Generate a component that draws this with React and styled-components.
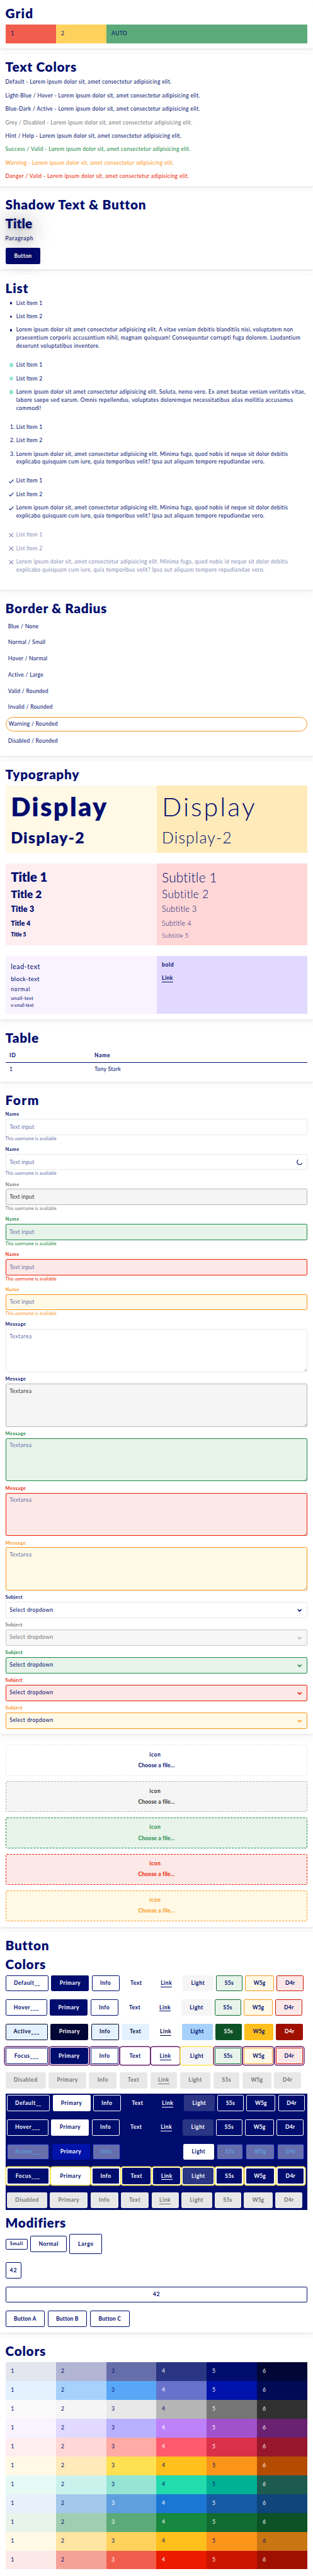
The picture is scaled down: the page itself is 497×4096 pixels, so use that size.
import React from "react";
import styled, { createGlobalStyle, css } from "styled-components";

const navy = "#000d6e";
const green = "#16883f";
const red = "#eb1a00";
const orange = "#fb951a";

const GlobalStyle = createGlobalStyle`
  *, *::before, *::after { box-sizing: border-box; }
  html { font-size: 8.5735px; background: #fff; }
  body {
    margin: 0;
    color: ${navy};
    font-family: Lato, "Open Sans", sans-serif;
    font-size: 1rem;
    line-height: 1.5rem;
    letter-spacing: 0.035em;
    overflow: hidden;
  }
  p, h1, ul, ol { margin: 0; padding: 0; }
`;

const Page = styled.main`
  display: flex;
  flex-direction: column;
  gap: 1rem;
`;

const Section = styled.section`
  padding: 1rem;
  border-radius: 0.25rem;
  background: #fff;
  box-shadow: 0 0.125rem 0.6rem rgba(0, 0, 0, 0.11);
`;

const Heading = styled.h1`
  font-size: 2.42rem;
  font-weight: 800;
  line-height: 3rem;
  letter-spacing: ${(p) => (p.$track === undefined ? 0.036 : p.$track)}em;
  margin-bottom: 0.5rem;
  white-space: nowrap;
`;

const Grid = styled.div`
  display: grid;
  grid-template-columns: ${(p) => p.$columns};
`;

const Cell = styled.div`
  padding: 1rem;
  background: ${(p) => p.$bg};
  color: ${(p) => p.$color || navy};
`;

const Paragraph = styled.p`
  color: ${(p) => p.$color || navy};
  letter-spacing: ${(p) => p.$track || 0.0365}em;
  white-space: nowrap;
  & + & { margin-top: 1rem; }
`;

const shadowText = css`
  text-shadow: 0 0.125rem 0.5rem rgba(0, 0, 0, 0.28), 0 0.5rem 4rem rgba(0, 0, 0, 0.75);
`;

const ShadowHeading = styled(Heading)`
  ${shadowText}
`;

const ShadowParagraph = styled(Paragraph)`
  margin-bottom: 1rem;
  ${shadowText}
`;

const Button = styled.button`
  display: inline-flex;
  align-items: center;
  justify-content: center;
  flex: none;
  width: ${(p) => (p.$w ? `${p.$w / 16}rem` : "100%")};
  height: ${(p) => (p.$h || 48) / 16}rem;
  padding: 0;
  border: 0.125rem solid ${(p) => p.$border || "transparent"};
  border-radius: 0.25rem;
  background: ${(p) => p.$bg || "transparent"};
  background-clip: ${(p) => (p.$border ? "padding-box" : "border-box")};
  color: ${(p) => p.$color || navy};
  font-family: inherit;
  font-size: ${(p) => p.$size || "1rem"};
  font-weight: 700;
  line-height: 1.5rem;
  letter-spacing: ${(p) => (p.$track === undefined ? 0.06 : p.$track)}em;
  white-space: nowrap;
  ${(p) =>
    p.$ring &&
    css`
      box-shadow: 0 0 0 0.125rem #fff, 0 0 0 0.3rem ${p.$ring};
    `}
`;

const ShadowButton = styled(Button)`
  text-shadow: 0 0.125rem 0.5rem rgba(0, 0, 0, 0.5), 0 0.5rem 4rem rgba(0, 0, 0, 0.75);
`;

const ButtonRow = styled.div`
  display: flex;
  align-items: center;
  gap: 0.5rem;
  & + & { margin-top: 1.5rem; }
`;

const DarkPanel = styled.div`
  margin: 1rem 0;
  padding: 0.25rem;
  background: ${navy};
`;

const LinkText = styled.span`
  display: inline-block;
  border-bottom: 0.125rem solid currentColor;
  line-height: 1.25rem;
  margin-top: 0.125rem;
`;

/* Lists */
const List = styled.ul`
  list-style: none;
  margin-bottom: 2rem;
  opacity: ${(p) => (p.$muted ? 0.5 : 1)};
`;

const Item = styled.li`
  display: flex;
  & + & { margin-top: 1rem; }
`;

const Marker = styled.span`
  display: flex;
  align-items: center;
  justify-content: ${(p) => (p.$end ? "flex-end" : "center")};
  flex: none;
  width: 2rem;
  height: 1.5rem;
  padding-left: 0.125rem;
  padding-right: ${(p) => (p.$end ? "0.25rem" : 0)};
`;

const Dot = styled.span`
  width: ${(p) => p.$size}rem;
  height: ${(p) => p.$size}rem;
  border-radius: 50%;
  background: ${(p) => p.$color};
  margin-left: ${(p) => (p.$shift || 0)}rem;
`;

const ItemText = styled.div`
  display: flex;
  flex-direction: column;
`;

const ItemLine = styled.span`
  letter-spacing: ${(p) => p.$track}em;
  white-space: nowrap;
`;

const Glyph = styled.svg`
  display: block;
  width: ${(p) => p.$w}rem;
  height: ${(p) => p.$h}rem;
  fill: none;
  stroke: ${(p) => p.$color || "currentColor"};
`;

/* Border & Radius */
const BorderBox = styled.div`
  padding: 0.5rem;
  margin-bottom: 0.5rem;
  border-radius: 1.5rem;
  letter-spacing: 0.03em;
  ${(p) => p.$outlined && css`border: 0.125rem solid ${orange};`}
`;

/* Typography */
const TypeBlock = styled(Grid)`
  & + & { margin-top: 2rem; }
`;

const TypeLine = styled.div`
  margin-top: ${(p) => (p.$gap || 0) / 16}rem;
  font-size: ${(p) => p.$size / 16}rem;
  line-height: ${(p) => p.$line / 16}rem;
  font-weight: ${(p) => p.$weight || 400};
  letter-spacing: ${(p) => p.$track || 0}em;
  white-space: nowrap;
`;

/* Table */
const Table = styled.table`
  width: 100%;
  border-collapse: collapse;
  th, td {
    padding: 0.5rem 0.75rem;
    text-align: left;
    vertical-align: top;
  }
  th {
    border-bottom: 0.125rem solid ${navy};
    letter-spacing: 0.075em;
  }
  th:first-child { width: 15.75rem; }
`;

/* Form */
const Field = styled.div`
  display: flex;
  flex-direction: column;
  & + & { margin-top: 0.75rem; }
`;

const Label = styled.label`
  height: 1.375rem;
  color: ${(p) => p.$color || navy};
  font-size: 0.875rem;
  font-weight: 700;
  line-height: 1.2rem;
  letter-spacing: ${(p) => p.$track}em;
`;

const Help = styled.p`
  height: 1.375rem;
  color: ${(p) => p.$color || "#6670ab"};
  font-size: 0.8125rem;
  line-height: 1.25rem;
  letter-spacing: 0.0133em;
`;

const control = css`
  display: block;
  width: 100%;
  margin: 0;
  border: 0.125rem solid ${(p) => p.$border};
  border-radius: 0.25rem;
  background: ${(p) => p.$bg};
  color: ${(p) => p.$color || navy};
  font-family: inherit;
  font-size: 1rem;
  line-height: 1.5rem;
  letter-spacing: ${(p) => p.$track}em;
  outline: none;
  &::placeholder { color: ${(p) => p.$placeholder || "#6670ab"}; opacity: 1; }
`;

const Input = styled.input`
  ${control}
  height: 3rem;
  padding: 0 0.65rem;
`;

const TextArea = styled.textarea`
  ${control}
  height: 8rem;
  padding: 0.55rem 0.65rem;
  resize: none;
`;

const Select = styled.div`
  ${control}
  display: flex;
  align-items: center;
  justify-content: space-between;
  height: 3rem;
  padding: 0 0.9rem 0 0.65rem;
`;

const Control = styled.div`
  position: relative;
`;

const Spinner = styled(Glyph)`
  position: absolute;
  right: 0.95rem;
  top: 0.95rem;
`;

const Grip = styled(Glyph)`
  position: absolute;
  right: 0.15rem;
  bottom: 0.15rem;
`;

const FileBox = styled.div`
  display: flex;
  flex-direction: column;
  align-items: center;
  gap: 0.5rem;
  height: 5.75rem;
  padding: 1rem;
  border: 0.125rem dashed ${(p) => p.$border};
  border-radius: 0.25rem;
  background: ${(p) => p.$bg};
  color: ${(p) => p.$color};
  font-weight: 700;
  letter-spacing: 0.02em;
  & + & { margin-top: 1rem; }
`;

const FileIcon = styled.span`
  margin-right: 0.5rem;
  letter-spacing: 0.07em;
`;

const tones = {
  normal: { border: "#e8e8e8", bg: "#fff" },
  disabled: { border: "#b5b5b5", bg: "#f5f5f5", text: "#757575", placeholder: "#303030" },
  valid: { border: green, bg: "#e8f3ea", text: green },
  invalid: { border: red, bg: "#fce8e6", text: red },
  warning: { border: orange, bg: "#fff9e6", text: orange },
};
const toneNames = ["normal", "disabled", "valid", "invalid", "warning"];

function TextField({ tone, loading }) {
  const t = tones[tone];
  return (
    <Field>
      <Label $color={t.text} $track={0.08}>Name</Label>
      <Control>
        <Input readOnly placeholder="Text input" $track={0.023} $border={t.border} $bg={t.bg} $placeholder={t.placeholder} />
        {loading && (
          <Spinner $w={1.1} $h={1.1} viewBox="0 0 18 18" strokeWidth="2.2">
            <path d="M5.2 2.2A7.8 7.8 0 1 0 16.2 12.2" />
          </Spinner>
        )}
      </Control>
      <Help $color={t.text}>This username is available</Help>
    </Field>
  );
}

function MessageField({ tone }) {
  const t = tones[tone];
  return (
    <Field>
      <Label $color={tone === "disabled" ? navy : t.text} $track={0.065}>Message</Label>
      <Control>
        <TextArea readOnly placeholder="Textarea" $track={0.05} $border={t.border} $bg={t.bg} $placeholder={t.placeholder} />
        <Grip $w={0.5} $h={0.5} $color="#555" viewBox="0 0 8 8" strokeWidth="0.9">
          <path d="M0.5 7.5L7.5 0.5M4.5 7.5L7.5 4.5" />
        </Grip>
      </Control>
    </Field>
  );
}

function SelectField({ tone }) {
  const t = tones[tone];
  const off = tone === "disabled";
  return (
    <Field>
      <Label $color={t.text} $track={0.05}>Subject</Label>
      <Select
        $track={0.046}
        $border={off ? "#c8c8c8" : t.border}
        $bg={off ? "#f7f7f7" : t.bg}
        $color={off ? "#757575" : navy}
      >
        <span>Select dropdown</span>
        <Glyph $w={0.875} $h={0.875} $color={off ? "#b5b5b5" : t.text || navy} viewBox="0 0 14 14" strokeWidth="3">
          <path d="M1.5 5.5L7 11L12.5 5.5" />
        </Glyph>
      </Select>
    </Field>
  );
}

const minima = [
  ["Lorem ipsum dolor sit, amet consectetur adipisicing elit. Minima fuga, quod nobis id neque sit dolor debitis", 0.038],
  ["explicabo quisquam cum iure, quia temporibus velit? Ipsa aut aliquam tempore repudiandae vero.", 0.041],
];
const lists = [
  {
    kind: "bullet",
    lines: [
      ["Lorem ipsum dolor sit amet consectetur adipisicing elit. A vitae veniam debitis blanditiis nisi, voluptatem non", 0.0387],
      ["praesentium corporis accusantium nihil, magnam quisquam! Consequuntur corrupti fuga dolorem. Laudantium", 0.0464],
      ["deserunt voluptatibus inventore.", 0.042],
    ],
  },
  {
    kind: "mint",
    lines: [
      ["Lorem ipsum dolor sit amet consectetur adipisicing elit. Soluta, nemo vero. Ex amet beatae veniam veritatis vitae,", 0.04],
      ["labore saepe sed earum. Omnis repellendus, voluptates doloremque necessitatibus alias mollitia accusamus", 0.0457],
      ["commodi!", 0.045],
    ],
  },
  { kind: "number", lines: minima },
  { kind: "check", lines: minima },
  { kind: "cross", lines: minima },
];

function ItemMarker({ kind, index }) {
  if (kind === "number") return <Marker $end>{index + 1}.</Marker>;
  return (
    <Marker>
      {kind === "bullet" && <Dot $size={0.4} $color={navy} />}
      {kind === "mint" && <Dot $size={0.78} $color="#96e4d4" $shift={0.1} />}
      {kind === "check" && (
        <Glyph $w={0.9} $h={0.9} viewBox="0 0 14 14" strokeWidth="2">
          <path d="M0.8 9L4.6 12.4L13.2 3" />
        </Glyph>
      )}
      {kind === "cross" && (
        <Glyph $w={0.9} $h={0.9} viewBox="0 0 14 14" strokeWidth="2">
          <path d="M1 1.4L13 13.4M13 1.4L1 13.4" />
        </Glyph>
      )}
    </Marker>
  );
}

const paragraphs = [
  ["Default", navy],
  ["Light-Blue / Hover", navy],
  ["Blue-Dark / Active", navy],
  ["Grey / Disabled", "#757575"],
  ["Hint / Help", navy],
  ["Success / Valid", green],
  ["Warning", orange],
  ["Danger / Valid", red],
];

const borders = [
  "Blue / None",
  "Normal / Small",
  "Hover / Normal",
  "Active / Large",
  "Valid / Rounded",
  "Invalid / Rounded",
  "Warning / Rounded",
  "Disabled / Rounded",
];

const kinds = [
  ["Primary", 112],
  ["Info", 82],
  ["Text", 83.2],
  ["Link", 80],
  ["Light", 91],
  ["S5s", 78, 0.03],
  ["W5g", 86, 0],
  ["D4r", 80, 0.03],
];

const outline = (border, bg, color) => ({ border, bg, color });
const lightDefault = {
  first: outline(navy, "#fff", navy),
  Primary: { bg: navy, color: "#fff" },
  Info: outline(navy, "#fff", navy),
  Text: { color: navy },
  Link: { color: navy },
  Light: { bg: "#f5f5f5", color: navy },
  S5s: outline("#116b33", "#e8f3ea", navy),
  W5g: outline(orange, "#fff9e6", navy),
  D4r: outline("#cb1500", "#fce8e6", navy),
};
const ink = "#000635";
const lightActive = {
  first: outline(ink, "#e4f1ff", ink),
  Primary: { bg: ink, color: "#fff" },
  Info: outline(ink, "#e4f1ff", ink),
  Text: { bg: "#e4f1ff", color: ink },
  Link: { color: ink },
  Light: { bg: "#a6d1fb", color: navy },
  S5s: { bg: "#0d5226", color: "#fff" },
  W5g: { bg: "#ffbf1c", color: navy },
  D4r: { bg: "#9f1000", color: "#fff" },
};
const disabled = { bg: "#e8e8e8", color: "#757575" };
const allDisabled = {
  first: disabled, Primary: disabled, Info: disabled, Text: disabled, Link: disabled,
  Light: disabled, S5s: disabled, W5g: disabled, D4r: disabled,
};
const whiteLine = outline("#fff", navy, "#fff");
const darkDefault = {
  first: whiteLine,
  Primary: { bg: "#fff", color: navy },
  Info: whiteLine,
  Text: { color: "#fff" },
  Link: { color: "#fff" },
  Light: { bg: "#2a3583", color: "#fff" },
  S5s: whiteLine,
  W5g: whiteLine,
  D4r: whiteLine,
};
const pressed = outline("#0013ab", "#666eab", "#5f9fe0");
const darkActive = {
  first: pressed,
  Primary: { bg: "#0013ab", color: "#fff" },
  Info: pressed,
  Text: { color: navy },
  Link: { color: navy },
  Light: { bg: "#fff", color: navy },
  S5s: pressed,
  W5g: pressed,
  D4r: pressed,
};

const lightRows = [
  ["Default__", 128, lightDefault],
  ["Hover___", 124, lightDefault],
  ["Active___", 126, lightActive],
  ["Focus___", 125, lightDefault, "#6b2171"],
  ["Disabled", 120, allDisabled],
];
const darkRows = [
  ["Default__", 128, darkDefault],
  ["Hover___", 124, darkDefault],
  ["Active___", 126, darkActive],
  ["Focus___", 125, darkDefault, "#fde152"],
  ["Disabled", 120, allDisabled],
];

function ColorRow({ row: [label, width, styles, ring], dark }) {
  const props = (key) => {
    const s = styles[key];
    return {
      $border: s.border,
      $bg: s.bg || (ring ? (dark ? navy : "#fff") : undefined),
      $color: s.color,
      $ring: ring && (key === "Light" ? "#fde152" : ring),
    };
  };
  return (
    <ButtonRow>
      <Button $w={width} $track={0.068} {...props("first")}>{label}</Button>
      {kinds.map(([name, w, track]) => (
        <Button key={name} $w={w} $track={track} {...props(name)}>
          {name === "Link" ? <LinkText>{name}</LinkText> : name}
        </Button>
      ))}
    </ButtonRow>
  );
}

const W = "#fff";
const palette = [
  [["#e3e6ee"], ["#b2b5d4"], ["#666eab"], ["#2a3583", W], [navy, W], ["#000635", W]],
  [["#e4f1ff"], ["#a6d1fb"], ["#58a7f7"], ["#6672cb", W], ["#0013ab", W], ["#000a55", W]],
  [["#fafafa"], ["#f5f5f5"], ["#e8e8e8"], ["#b5b5b5"], ["#757575", W], ["#303030", W]],
  [["#f8f3ff"], ["#e1d9ff"], ["#b8b1ff"], ["#bd82fb", W], ["#a052cb", W], ["#6b2171", W]],
  [["#ffeef0"], ["#ffd7d6"], ["#ffaaa5"], ["#ff5a6e", W], ["#da304a", W], ["#97162b", W]],
  [["#fff9e6"], ["#ffeaba"], ["#fde152"], ["#ffbf1c"], ["#fb951a"], ["#b34c00", W]],
  [["#e6faf5"], ["#caf2ed"], ["#96e4d4"], ["#22dcae"], ["#00b194"], ["#1d5b50", W]],
  [["#e8f0fb"], ["#a3c8ec"], ["#5f9fe0", W], ["#1b77d3", W], ["#155aa2", W], ["#10457b", W]],
  [["#e8f3ea"], ["#a0ceb3"], ["#5caa7a", W], ["#16883f", W], ["#116b33", W], ["#0d5226", W]],
  [["#fff9e6"], ["#ffe5a2"], ["#ffd25e"], ["#ffbf1c"], ["#fb951a"], ["#c97512"]],
  [["#fce8e6"], ["#f6a198"], ["#f15d4c", W], ["#eb1a00", W], ["#cb1500", W], ["#9f1000", W]],
];

export default function App() {
  return (
    <Page>
      <GlobalStyle />
      <Section>
        <Heading $track={0.054}>Grid</Heading>
        <Grid $columns="1fr 1fr 4fr">
          <Cell $bg="#f15d4c">1</Cell>
          <Cell $bg="#ffd25e">2</Cell>
          <Cell $bg="#5caa7a">AUTO</Cell>
        </Grid>
      </Section>

      <Section>
        <Heading>Text Colors</Heading>
        {paragraphs.map(([name, color]) => (
          <Paragraph key={name} $color={color}>
            {name} - Lorem ipsum dolor sit, amet consectetur adipisicing elit.
          </Paragraph>
        ))}
      </Section>

      <Section>
        <Heading>Shadow Text &amp; Button</Heading>
        <ShadowHeading $track={0}>Title</ShadowHeading>
        <ShadowParagraph $track={0.09}>Paragraph</ShadowParagraph>
        <ButtonRow>
          <ShadowButton $w={104} $bg={navy} $color="#fff" $track={0.03}>Button</ShadowButton>
        </ButtonRow>
      </Section>

      <Section>
        <Heading>List</Heading>
        {lists.map(({ kind, lines }) => (
          <List key={kind} as={kind === "number" ? "ol" : "ul"} $muted={kind === "cross"}>
            {[[["List Item 1", 0.023]], [["List Item 2", 0.023]], lines].map((text, i) => (
              <Item key={i}>
                <ItemMarker kind={kind} index={i} />
                <ItemText>
                  {text.map(([line, track]) => (
                    <ItemLine key={line} $track={track}>{line}</ItemLine>
                  ))}
                </ItemText>
              </Item>
            ))}
          </List>
        ))}
      </Section>

      <Section>
        <Heading $track={0.031}>Border &amp; Radius</Heading>
        {borders.map((name) => (
          <BorderBox key={name} $outlined={name.startsWith("Warning")}>{name}</BorderBox>
        ))}
      </Section>

      <Section>
        <Heading>Typography</Heading>
        <TypeBlock $columns="1fr 1fr">
          <Cell $bg="#fff9e6">
            <TypeLine $size={77} $line={96} $weight={800} $track={0.058}>Display</TypeLine>
            <TypeLine $size={46.5} $line={58} $gap={14} $weight={800} $track={0.048}>Display-2</TypeLine>
          </Cell>
          <Cell $bg="#ffeaba">
            <TypeLine $size={77} $line={96} $weight={300} $track={0.072}>Display</TypeLine>
            <TypeLine $size={46.5} $line={58} $gap={14} $weight={300} $track={0.043}>Display-2</TypeLine>
          </Cell>
        </TypeBlock>
        <TypeBlock $columns="1fr 1fr">
          <Cell $bg="#ffeef0">
            <TypeLine $size={38.7} $line={48} $weight={800} $track={-0.01}>Title 1</TypeLine>
            <TypeLine $size={32} $line={56} $weight={800}>Title 2</TypeLine>
            <TypeLine $size={24} $line={32} $weight={800} $track={0.003}>Title 3</TypeLine>
            <TypeLine $size={20} $line={49} $weight={800} $track={0.008}>Title 4</TypeLine>
            <TypeLine $size={16} $line={21} $weight={800} $track={-0.006}>Title 5</TypeLine>
          </Cell>
          <Cell $bg="#ffd7d6">
            <TypeLine $size={39} $line={48} $weight={300} $track={0.0085}>Subtitle 1</TypeLine>
            <TypeLine $size={32} $line={56} $weight={300} $track={0.023}>Subtitle 2</TypeLine>
            <TypeLine $size={24} $line={32} $weight={300} $track={0.0196}>Subtitle 3</TypeLine>
            <TypeLine $size={20} $line={49} $weight={300} $track={0.026}>Subtitle 4</TypeLine>
            <TypeLine $size={18} $line={25} $weight={300} $track={0.0295}>Subtitle 5</TypeLine>
          </Cell>
        </TypeBlock>
        <TypeBlock $columns="1fr 1fr">
          <Cell $bg="#f8f3ff">
            <TypeLine $size={20} $line={32.5} $track={0.05}>lead-text</TypeLine>
            <TypeLine $size={18} $line={38.5} $track={0.0315}>block-text</TypeLine>
            <TypeLine $size={16} $line={28.5} $track={0.0946}>normal</TypeLine>
            <TypeLine $size={14} $line={22.5} $track={0.047}>small-text</TypeLine>
            <TypeLine $size={12.5} $line={18} $track={0.021}>x-small-text</TypeLine>
          </Cell>
          <Cell $bg="#e1d9ff">
            <TypeLine $size={16} $line={24} $weight={700} $track={0.072}>bold</TypeLine>
            <TypeLine $size={16} $line={54} $weight={700} $track={0.05}><LinkText>Link</LinkText></TypeLine>
          </Cell>
        </TypeBlock>
      </Section>

      <Section>
        <Heading>Table</Heading>
        <Table>
          <thead>
            <tr><th>ID</th><th>Name</th></tr>
          </thead>
          <tbody>
            <tr><td>1</td><td>Tony Stark</td></tr>
          </tbody>
        </Table>
      </Section>

      <Section>
        <Heading $track={0.07}>Form</Heading>
        <TextField tone="normal" />
        <TextField tone="normal" loading />
        <TextField tone="disabled" />
        <TextField tone="valid" />
        <TextField tone="invalid" />
        <TextField tone="warning" />
        {toneNames.map((tone) => <MessageField key={tone} tone={tone} />)}
        {toneNames.map((tone) => <SelectField key={tone} tone={tone} />)}
      </Section>

      <Section>
        {toneNames.map((tone) => {
          const t = tones[tone];
          return (
            <FileBox key={tone} $border={t.border} $bg={t.bg} $color={tone === "disabled" ? "#303030" : t.text || navy}>
              <FileIcon>icon</FileIcon>
              <span>Choose a file…</span>
            </FileBox>
          );
        })}
      </Section>

      <Section>
        <Heading>Button</Heading>
        <Heading>Colors</Heading>
        {lightRows.map((row) => <ColorRow key={row[0]} row={row} />)}
        <DarkPanel>
          {darkRows.map((row) => <ColorRow key={row[0]} row={row} dark />)}
        </DarkPanel>
        <Heading $track={0.031}>Modifiers</Heading>
        <ButtonRow>
          <Button $w={66} $h={32} $size="0.875rem" $border={navy} $bg="#fff" $track={0.08}>Small</Button>
          <Button $w={108} $border={navy} $bg="#fff">Normal</Button>
          <Button $w={97} $h={60} $border={navy} $bg="#fff" $track={0.09}>Large</Button>
        </ButtonRow>
        <ButtonRow>
          <Button $w={48} $border={navy} $bg="#fff" $track={0.1}>42</Button>
        </ButtonRow>
        <ButtonRow>
          <Button $border={navy} $bg="#fff" $track={0.1}>42</Button>
        </ButtonRow>
        <ButtonRow>
          <Button $w={117} $border={navy} $bg="#fff" $track={0.02}>Button A</Button>
          <Button $w={117} $border={navy} $bg="#fff" $track={0.02}>Button B</Button>
          <Button $w={119} $border={navy} $bg="#fff" $track={0.02}>Button C</Button>
        </ButtonRow>
      </Section>

      <Section>
        <Heading>Colors</Heading>
        <Grid $columns="repeat(6, 1fr)">
          {palette.map((row, r) =>
            row.map(([bg, color], c) => (
              <Cell key={`${r}-${c}`} $bg={bg} $color={color}>{c + 1}</Cell>
            ))
          )}
        </Grid>
      </Section>
    </Page>
  );
}
